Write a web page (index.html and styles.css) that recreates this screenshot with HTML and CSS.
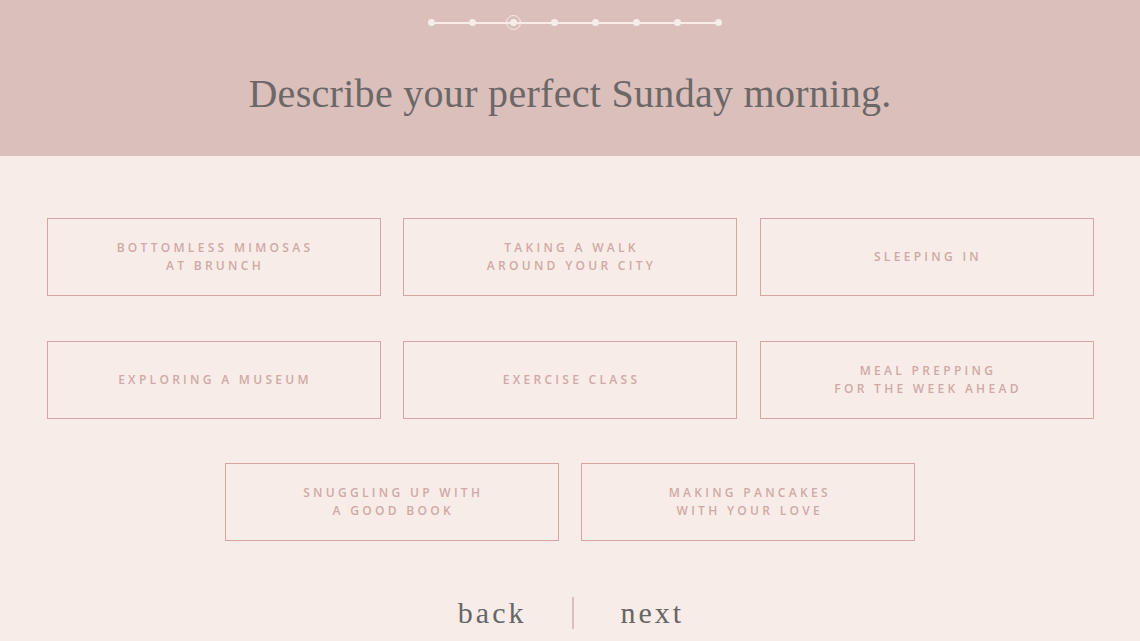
FILE: index.html
```html
<!DOCTYPE html>
<html lang="en">
<head>
    <meta charset="UTF-8">
    <meta name="viewport" content="width=device-width, initial-scale=1.0">
    <title>Sunday Quiz</title>
    <link rel="stylesheet" href="styles.css">
</head>
<body>

<div class="header">
    <div class="progress">
        <span class="dot"></span>
        <span class="dot"></span>
        <span class="dot active"></span>
        <span class="dot"></span>
        <span class="dot"></span>
        <span class="dot"></span>
        <span class="dot"></span>
        <span class="dot"></span>
    </div>
    <h1>Describe your perfect Sunday morning.</h1>
</div>

<div class="options">
    <button class="option">Bottomless mimosas<br>at brunch</button>
    <button class="option">Taking a walk<br>around your city</button>
    <button class="option">Sleeping in</button>
    <button class="option">Exploring a museum</button>
    <button class="option">Exercise class</button>
    <button class="option">Meal prepping<br>for the week ahead</button>
    <button class="option">Snuggling up with<br>a good book</button>
    <button class="option">Making pancakes<br>with your love</button>
</div>

<div class="nav">
    <a class="nav-link" href="#">back</a>
    <span class="divider"></span>
    <a class="nav-link" href="#">next</a>
</div>

</body>
</html>
```

FILE: styles.css
```css
body {
    margin: 0;
    background-color: #f8ece8;
    font-family: "Liberation Serif", serif;
}
.header {
    background-color: #dbbfbb;
    height: 156px;
    padding-top: 19px;
    box-sizing: border-box;
}
/* step indicator: 8 dots joined by a thin line */
.progress {
    display: flex;
    align-items: center;
    width: 294px;
    height: 7px;
    margin-left: calc(50% - 142px);
    position: relative;
}
.progress::before {
    content: "";
    position: absolute;
    left: 3px;
    right: 3px;
    top: 2.5px;
    height: 2px;
    background: #f8ece8;
}
.dot {
    position: relative;
    flex: none;
    width: 7px;
    height: 7px;
    border-radius: 50%;
    background: #f8ece8;
    margin-right: 34px;
}
.dot:last-child { margin-right: 0; }
.dot.active::after {
    content: "";
    position: absolute;
    left: -4px;
    top: -4px;
    width: 15px;
    height: 15px;
    box-sizing: border-box;
    border: 1px solid #f8ece8;
    border-radius: 50%;
}
h1 {
    margin: 44px 0 0;
    text-align: center;
    font-weight: normal;
    font-size: 40px;
    color: #6b6867;
    letter-spacing: 0.3px;
}
.options {
    display: flex;
    flex-wrap: wrap;
    justify-content: center;
    column-gap: 22.5px;
    row-gap: 44.5px;
    width: 1047px;
    margin: 62px auto 0;
}
.option {
    width: 334px;
    height: 78px;
    background: transparent;
    border: 1px solid #d4a5a3;
    font-family: "Open Sans", sans-serif;
    font-weight: 600;
    font-size: 12px;
    line-height: 18px;
    letter-spacing: 3.3px;
    text-transform: uppercase;
    color: #cfa9a6;
    padding: 0 0 0 3px;
}
.nav {
    display: flex;
    justify-content: center;
    align-items: center;
    gap: 46px;
    margin-top: 55px;
    padding-left: 2px;
}
.nav-link {
    font-size: 30px;
    letter-spacing: 3px;
    color: #666;
    text-decoration: none;
}
.divider {
    width: 2px;
    height: 32px;
    background: #dbbfbb;
}
```
